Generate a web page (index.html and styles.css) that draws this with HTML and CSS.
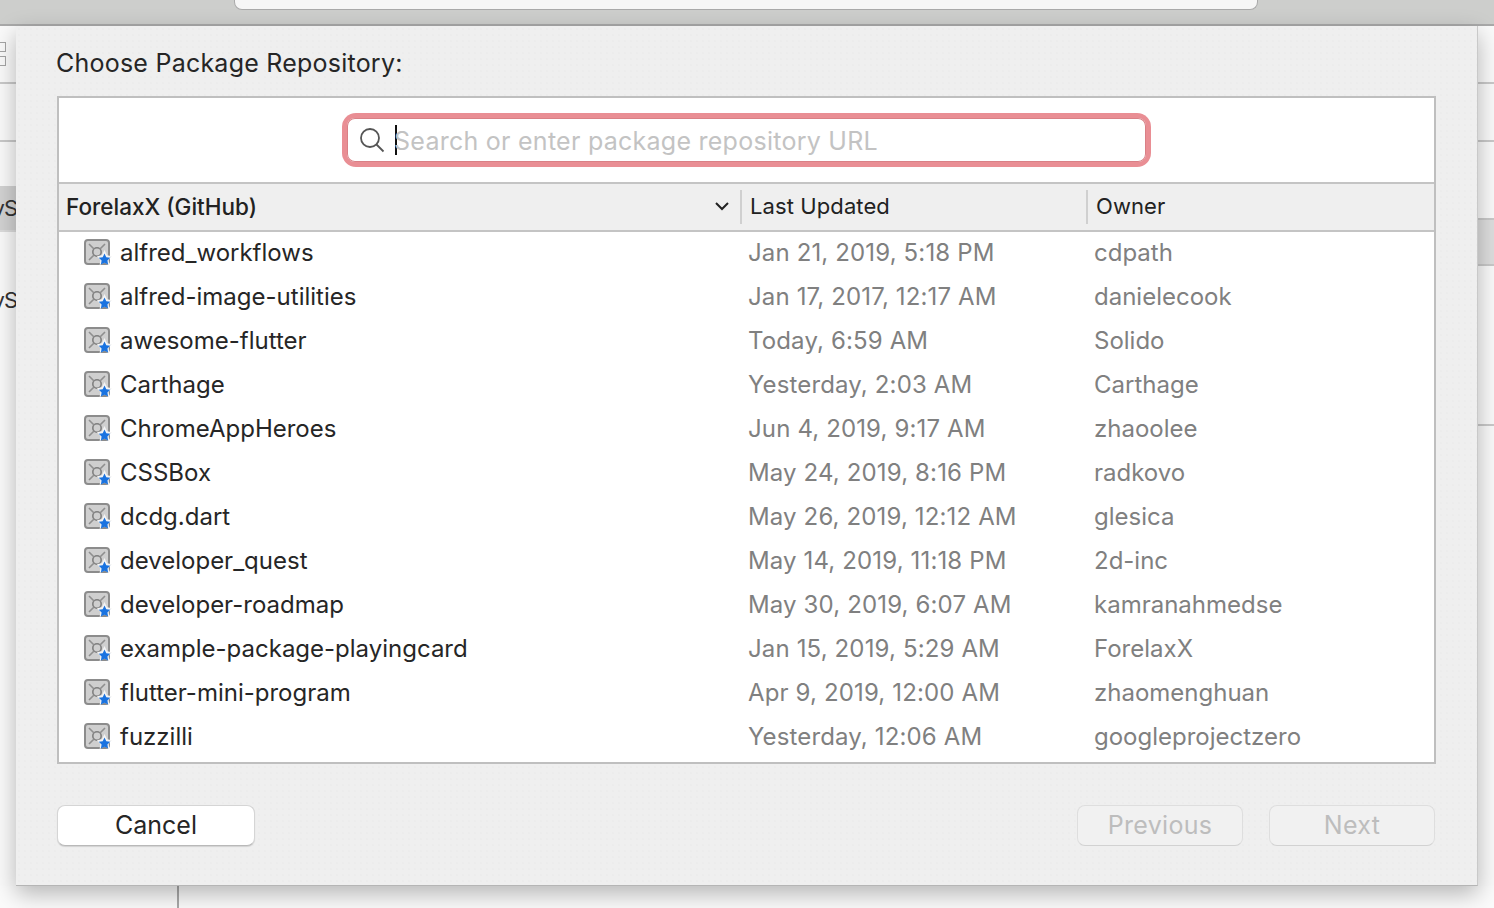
FILE: index.html
```html
<!DOCTYPE html>
<html lang="en">
<head>
<meta charset="utf-8">
<title>Choose Package Repository</title>
<link rel="stylesheet" href="styles.css">
</head>
<body>
<svg class="defs" width="0" height="0" aria-hidden="true">
  <symbol id="pkg" viewBox="0 0 28 28">
    <rect x="1" y="1" width="24" height="24" rx="3" fill="#cfcfcf" stroke="#8c8c8c" stroke-width="2"/>
    <circle cx="13" cy="13" r="4.2" fill="none" stroke="#7f7f7f" stroke-width="1.6"/>
    <path d="M5 5l5 5M21 5l-5 5M5 21l5-5" stroke="#8f8f8f" stroke-width="1.6" fill="none"/>
    <path d="M20.5 11l2.6 5.2 5 1-3.4 3.6.6 5.2-4.8-2.4-4.8 2.4.6-5.2-3.4-3.6 5-1z" fill="#f4f4f4"/>
    <path d="M20.5 14.6l1.8 3.6 4 .6-2.9 2.8.7 4-3.6-1.9-3.6 1.9.7-4-2.9-2.8 4-.6z" fill="#1a73e0"/>
  </symbol>
</svg>
<div class="backdrop-top"><div class="backdrop-field"></div></div>
<div class="stage">
  <aside class="strip strip-left">
    <div class="mini-icons"><span></span><span></span></div>
    <div class="strip-cell c1"></div>
    <div class="strip-cell c2"></div>
    <div class="strip-cell c3 selected"><span>vS</span></div>
    <div class="strip-cell c4"><span>vS</span></div>
  </aside>
  <main class="sheet">
    <h1 class="title">Choose Package Repository:</h1>
    <section class="panel">
      <div class="search-area">
        <div class="search-ring">
          <div class="search-box">
            <svg class="magnifier" width="26" height="26" viewBox="0 0 26 26"><circle cx="11" cy="11" r="9" fill="none" stroke="#555" stroke-width="1.8"/><path d="M17.5 17.5l7 7" stroke="#555" stroke-width="1.8"/></svg>
            <span class="caret"></span>
            <span class="placeholder">Search or enter package repository URL</span>
          </div>
        </div>
      </div>
      <div class="table-head">
        <div class="th th-name">
          <span>ForelaxX (GitHub)</span>
          <svg class="chevron" width="16" height="10" viewBox="0 0 16 10"><path d="M2 2l6 6 6-6" fill="none" stroke="#222" stroke-width="2"/></svg>
        </div>
        <div class="th th-date">Last Updated</div>
        <div class="th th-owner">Owner</div>
      </div>
      <div class="rows">
        <div class="row"><div class="name"><svg class="pkg" width="28" height="28"><use href="#pkg"/></svg>alfred_workflows</div><div class="date">Jan 21, 2019, 5:18 PM</div><div class="owner">cdpath</div></div>
        <div class="row"><div class="name"><svg class="pkg" width="28" height="28"><use href="#pkg"/></svg>alfred-image-utilities</div><div class="date">Jan 17, 2017, 12:17 AM</div><div class="owner">danielecook</div></div>
        <div class="row"><div class="name"><svg class="pkg" width="28" height="28"><use href="#pkg"/></svg>awesome-flutter</div><div class="date">Today, 6:59 AM</div><div class="owner">Solido</div></div>
        <div class="row"><div class="name"><svg class="pkg" width="28" height="28"><use href="#pkg"/></svg>Carthage</div><div class="date">Yesterday, 2:03 AM</div><div class="owner">Carthage</div></div>
        <div class="row"><div class="name"><svg class="pkg" width="28" height="28"><use href="#pkg"/></svg>ChromeAppHeroes</div><div class="date">Jun 4, 2019, 9:17 AM</div><div class="owner">zhaoolee</div></div>
        <div class="row"><div class="name"><svg class="pkg" width="28" height="28"><use href="#pkg"/></svg>CSSBox</div><div class="date">May 24, 2019, 8:16 PM</div><div class="owner">radkovo</div></div>
        <div class="row"><div class="name"><svg class="pkg" width="28" height="28"><use href="#pkg"/></svg>dcdg.dart</div><div class="date">May 26, 2019, 12:12 AM</div><div class="owner">glesica</div></div>
        <div class="row"><div class="name"><svg class="pkg" width="28" height="28"><use href="#pkg"/></svg>developer_quest</div><div class="date">May 14, 2019, 11:18 PM</div><div class="owner">2d-inc</div></div>
        <div class="row"><div class="name"><svg class="pkg" width="28" height="28"><use href="#pkg"/></svg>developer-roadmap</div><div class="date">May 30, 2019, 6:07 AM</div><div class="owner">kamranahmedse</div></div>
        <div class="row"><div class="name"><svg class="pkg" width="28" height="28"><use href="#pkg"/></svg>example-package-playingcard</div><div class="date">Jan 15, 2019, 5:29 AM</div><div class="owner">ForelaxX</div></div>
        <div class="row"><div class="name"><svg class="pkg" width="28" height="28"><use href="#pkg"/></svg>flutter-mini-program</div><div class="date">Apr 9, 2019, 12:00 AM</div><div class="owner">zhaomenghuan</div></div>
        <div class="row"><div class="name"><svg class="pkg" width="28" height="28"><use href="#pkg"/></svg>fuzzilli</div><div class="date">Yesterday, 12:06 AM</div><div class="owner">googleprojectzero</div></div>
      </div>
    </section>
    <footer class="actions">
      <button class="btn btn-cancel" type="button">Cancel</button>
      <div class="nav-buttons">
        <button class="btn btn-disabled" type="button" disabled>Previous</button>
        <button class="btn btn-disabled" type="button" disabled>Next</button>
      </div>
    </footer>
  </main>
  <aside class="strip strip-right">
    <div class="strip-cell r1"></div>
    <div class="strip-cell r2"></div>
    <div class="strip-cell r3 selected"></div>
    <div class="strip-cell r4"></div>
  </aside>
</div>
<div class="backdrop-bottom"><span class="bottom-line"></span></div>
</body>
</html>
```

FILE: styles.css
```css
* { box-sizing: border-box; }
html, body { margin: 0; padding: 0; }
body {
  width: 1494px;
  height: 908px;
  overflow: hidden;
  background: #fbfbfb;
  font-family: Inter, "Noto Sans", "Liberation Sans", sans-serif;
  color: #222;
}
.defs { position: absolute; }

.backdrop-top {
  height: 26px;
  padding: 0 236px 0 234px;
  background-color: #cdcecc;
  border-bottom: 2px solid #a9a9a9;
}
.backdrop-field {
  height: 10px;
  background: #f6f6f6;
  border: 1px solid #aaa;
  border-top: 0;
  border-radius: 0 0 8px 8px;
}

.stage { display: flex; height: 860px; }
.strip { flex: 1 1 0; overflow: hidden; background: #fafafa; }
.strip-left { width: 16px; flex: 0 0 16px; }
.strip-right { width: 17px; flex: 0 0 17px; }

.mini-icons { height: 56px; padding-top: 16px; display: flex; flex-direction: column; gap: 4px; }
.mini-icons span { display: block; width: 6px; height: 10px; border: 1px solid #a5a5a5; border-left: 0; }
.strip-cell { border-bottom: 2px solid #c9c9c9; display: flex; justify-content: flex-end; align-items: center; font-size: 22px; color: #333; }
.strip-cell span { white-space: nowrap; margin-right: -1px; letter-spacing: -1px; }
.c1 { height: 2px; }
.c2 { height: 58px; }
.c3 { height: 46px; margin-top: 44px; border-bottom: 2px solid #dcdcdc; }
.c4 { height: 46px; margin-top: 45px; border-bottom: 0; }
.selected { background: #d2d2d2; }
.r1 { height: 58px; }
.r2 { height: 58px; }
.r3 { height: 48px; margin-top: 76px; border-top: 2px solid #c9c9c9; background: #dedede; }
.r4 { height: 160px; }

.sheet {
  flex: 0 0 1461px;
  height: 860px;
  padding: 0 41px;
  background-color: #efefef;
  background-image: radial-gradient(#e9e9e9 0.6px, transparent 0.8px);
  background-size: 6px 6px;
  border-right: 1px solid #c9c9c9;
  border-bottom: 1px solid #b5b5b5;
  box-shadow: 0 8px 22px rgba(0, 0, 0, 0.28);
  position: relative;
  z-index: 1;
}
.title {
  margin: 0;
  height: 70px;
  padding-top: 20px;
  margin-left: -1px;
  font-size: 25px;
  line-height: 34px;
  font-weight: 400;
  letter-spacing: 0.23px;
  color: #262626;
}

.panel {
  width: 1379px;
  height: 668px;
  background: #fff;
  border: 2px solid #bfbfbf;
}
.search-area {
  height: 86px;
  padding: 15px 0 0 283px;
  border-bottom: 2px solid #c4c4c4;
}
.search-ring {
  width: 809px;
  height: 54px;
  padding: 5px;
  border-radius: 14px;
  background: #e98e94;
}
.search-box {
  height: 44px;
  display: flex;
  align-items: center;
  padding-left: 12px;
  background: #fff;
  border-radius: 8px;
  box-shadow: inset 0 0 0 1px #d98086;
}
.magnifier { flex: none; }
.caret { flex: none; width: 2px; height: 30px; margin-left: 10px; background: #111; }
.placeholder { margin-left: -3px; padding-top: 2px; font-size: 25px; letter-spacing: 0.26px; color: #c3c3c3; white-space: nowrap; }

.table-head {
  height: 48px;
  display: flex;
  padding-top: 6px;
  background: #efefef;
  border-bottom: 2px solid #c4c4c4;
  font-size: 22px;
  letter-spacing: 0.1px;
  color: #222;
}
.th { height: 34px; padding-bottom: 2px; display: flex; align-items: center; }
.th-name { width: 683px; padding: 0 10px 2px 7px; justify-content: space-between; border-right: 2px solid #d0d0d0; font-size: 22.5px; letter-spacing: 0; font-weight: 500; }
.th-date { width: 346px; padding-left: 8px; border-right: 2px solid #d0d0d0; }
.th-owner { padding-left: 8px; }
.chevron { flex: none; }

.row { height: 44px; padding-bottom: 3px; display: flex; align-items: center; font-size: 24px; }
.name { width: 689px; padding-left: 25px; display: flex; align-items: center; color: #262626; }
.pkg { flex: none; margin-right: 8px; }
.date { width: 346px; color: #808080; letter-spacing: 0.14px; }
.owner { color: #808080; }

.actions {
  display: flex;
  justify-content: space-between;
  padding: 41px 1px 0 0;
}
.nav-buttons { display: flex; gap: 26px; }
.btn {
  height: 41px;
  border-radius: 8px;
  font-family: inherit;
  font-size: 25px;
  line-height: 1;
  padding: 0;
}
.btn-cancel {
  width: 198px;
  background: #fff;
  color: #262626;
  border: 1px solid #d5d5d5;
  border-bottom-color: #b9b9b9;
  box-shadow: 0 1px 1px rgba(0, 0, 0, 0.12);
}
.btn-disabled {
  width: 166px;
  background: #f1f1f1;
  color: #bdbdbd;
  border: 1px solid #dedede;
  border-bottom-color: #d2d2d2;
  letter-spacing: 0.3px;
}

.backdrop-bottom { height: 22px; padding-left: 177px; }
.bottom-line { display: block; width: 2px; height: 22px; background: #a9a9a9; }
```
